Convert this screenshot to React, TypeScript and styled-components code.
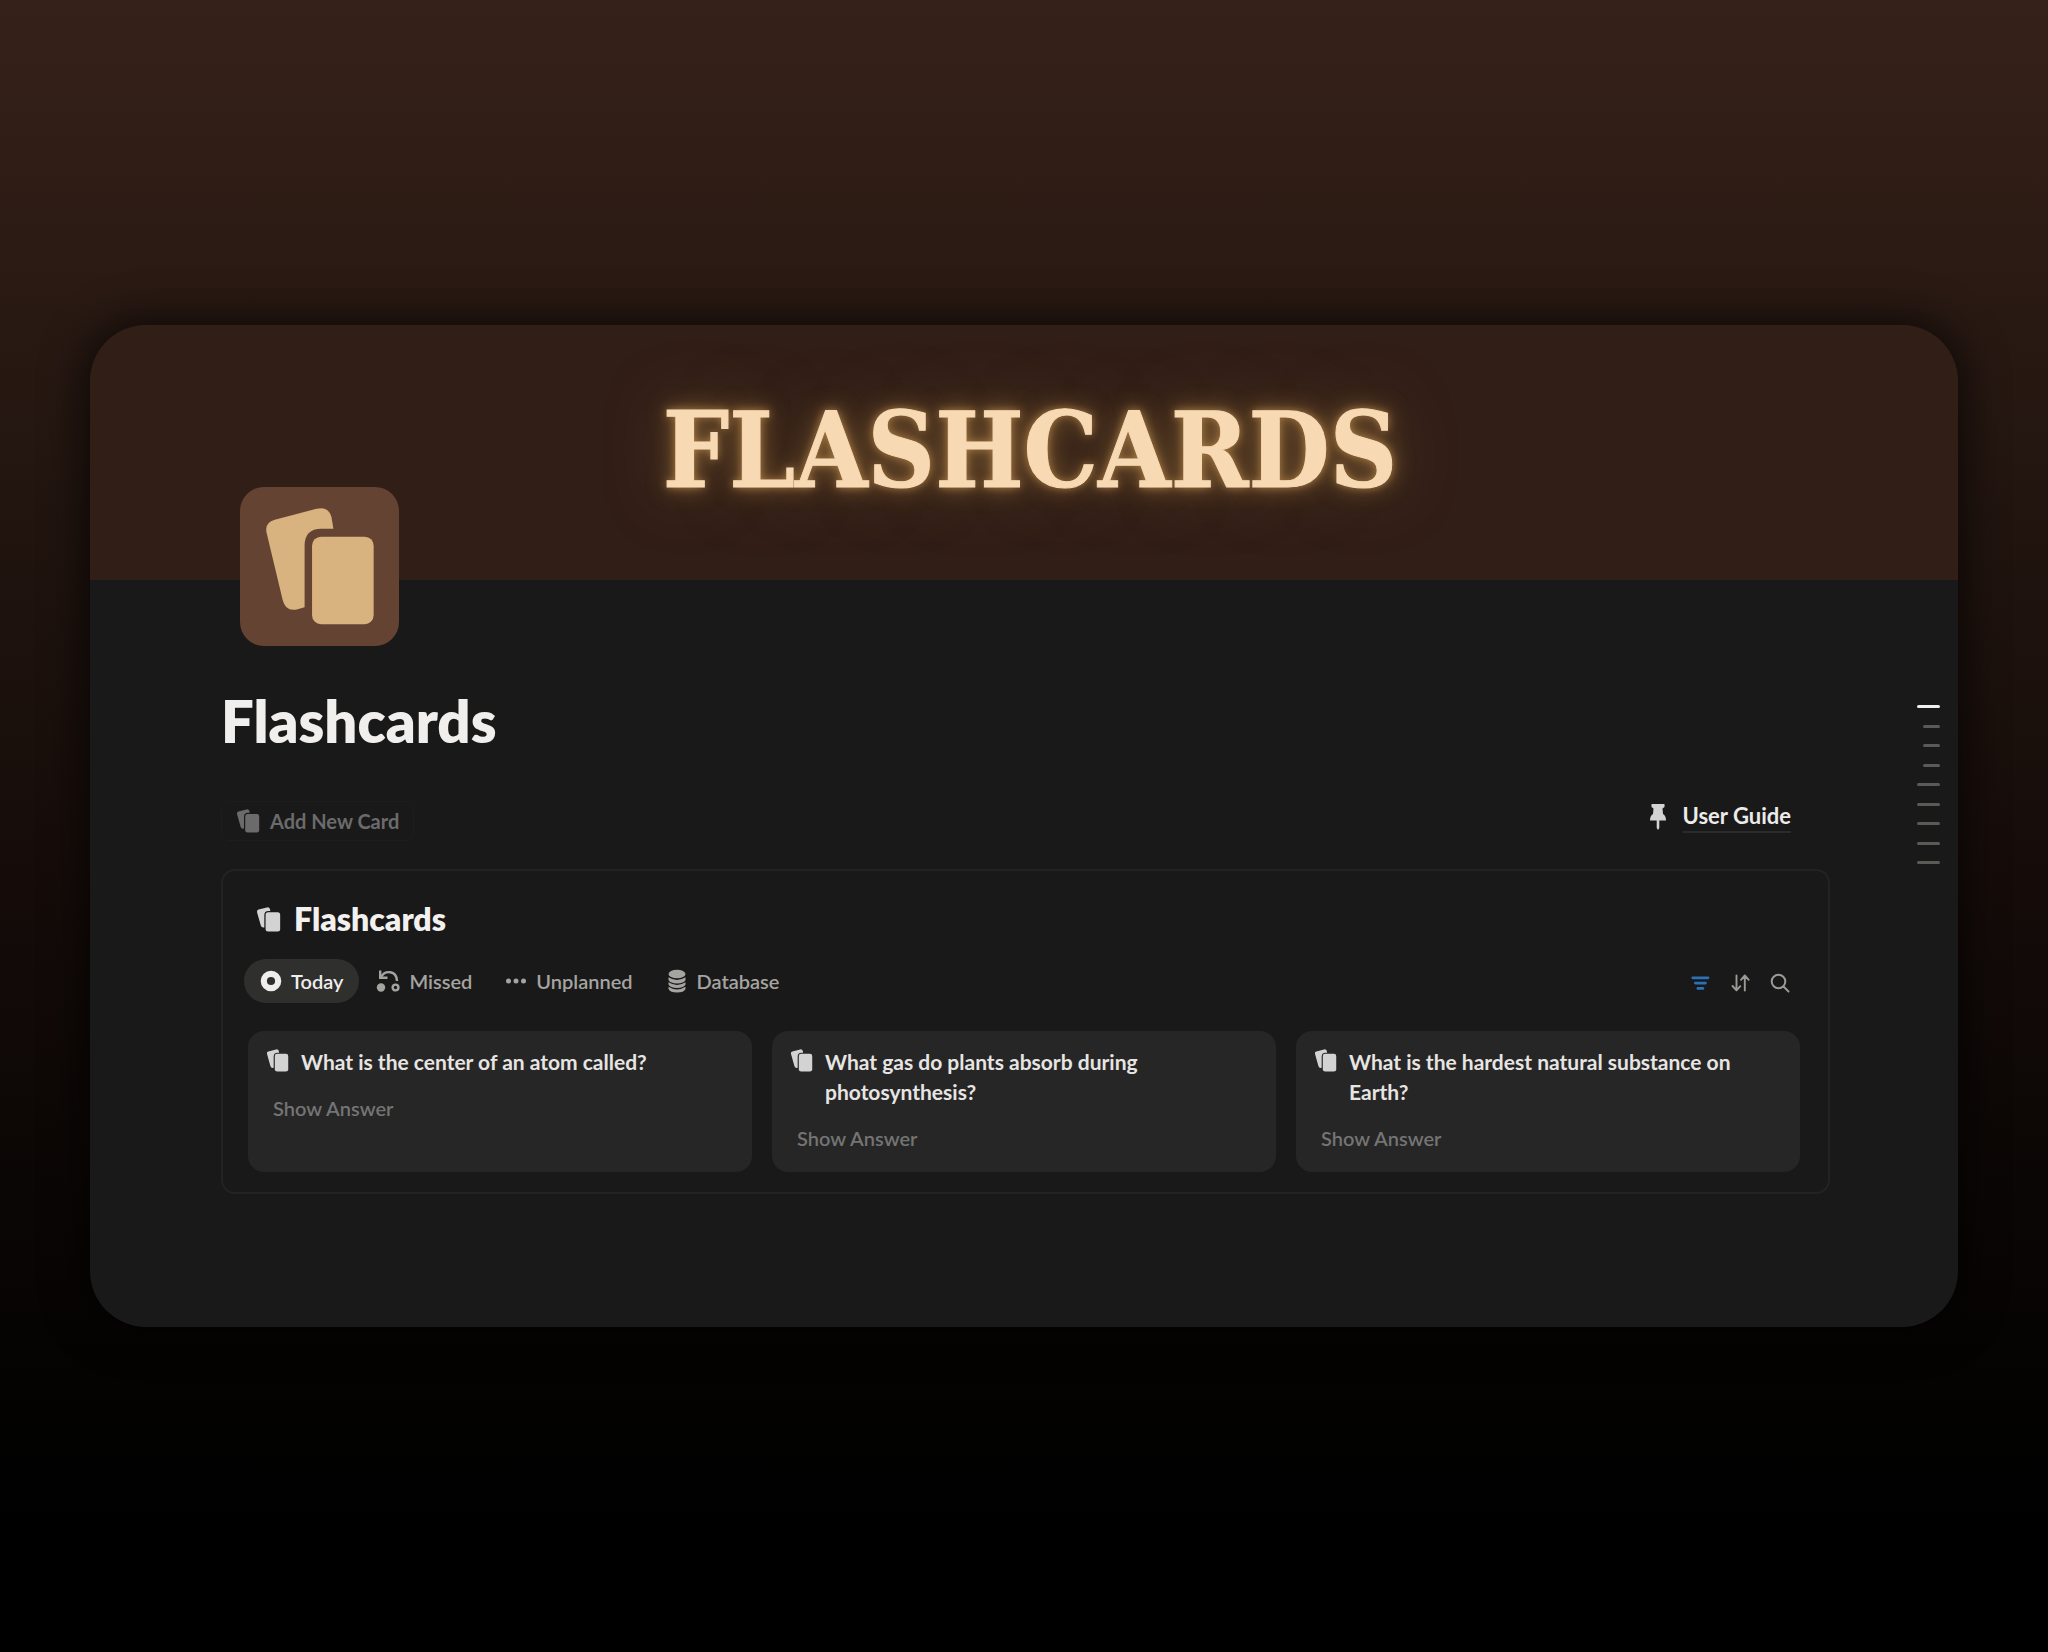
import React from "react";
import styled, { createGlobalStyle, css } from "styled-components";

const GlobalStyle = createGlobalStyle`
  *, *::before, *::after { box-sizing: border-box; }
  body {
    margin: 0;
    background: #000;
    color: #f0efed;
    font-family: Lato, "Open Sans", sans-serif;
    font-size: 20px;
    line-height: 30px;
  }
  button, a { font: inherit; color: inherit; }
  button { background: none; border: 0; padding: 0; margin: 0; cursor: pointer; }
  h1, h2, h3, p, ul { margin: 0; padding: 0; }
  ul { list-style: none; }
`;

const Backdrop = styled.div`
  min-height: 100vh;
  display: flex;
  align-items: center;
  padding: 64px 90px;
  background: linear-gradient(180deg, #36211a 0%, #2a1a13 17%, #1c110d 40%, #100907 62%, #040302 84%, #000 92%);
`;

const Page = styled.main`
  flex: 1;
  min-width: 0;
  border-radius: 56px;
  overflow: hidden;
  background: #191919;
  box-shadow: 0 0 44px 4px rgba(0, 0, 0, 0.7);
`;

const Banner = styled.header`
  height: 255px;
  display: flex;
  justify-content: center;
  align-items: center;
  padding: 0 0 4px 12px;
  background: #311e17;
`;

const Neon = styled.p`
  font-family: "DejaVu Serif Condensed", "DejaVu Serif", serif;
  font-weight: 700;
  font-size: 104px;
  line-height: 128px;
  color: #f7d9b3;
  -webkit-text-stroke: 1px #f7d9b3;
  text-shadow: 0 0 8px #b08048, 0 0 22px rgba(160, 118, 64, 0.8), 0 0 60px rgba(110, 86, 48, 0.8);
`;

const Content = styled.div`
  display: flow-root;
  position: relative;
  padding: 0 128px 133px 131px;
`;

const PageIcon = styled.div`
  width: 159px;
  height: 159px;
  margin: -93px 0 0 19px;
  border-radius: 24px;
  background: #654333;
  color: #d8b27f;
  display: flex;
  svg { width: 100%; height: 100%; }
`;

const Title = styled.h1`
  margin-top: 37px;
  font-size: 58px;
  line-height: 76px;
  font-weight: 800;
`;

const Actions = styled.div`
  margin-top: 42px;
  display: flex;
  justify-content: space-between;
  align-items: flex-start;
  padding-right: 39px;
`;

const AddButton = styled.button`
  height: 40px;
  display: flex;
  align-items: center;
  gap: 10px;
  padding: 0 14px;
  border: 1px solid #1d1d1d;
  border-radius: 8px;
  color: #6b6b6b;
  font-weight: 700;
`;

const GuideLink = styled.a`
  display: flex;
  align-items: center;
  gap: 14px;
  font-size: 22px;
  font-weight: 700;
  text-decoration: none;
  color: #ecebe9;
  span { border-bottom: 2px solid #2a2b2d; }
  svg { color: #d3d3d3; }
`;

const Board = styled.section`
  margin-top: 28px;
  padding: 28px 28px 20px 25px;
  border: 2px solid #232323;
  border-radius: 14px;
`;

const BoardTitle = styled.h2`
  display: flex;
  align-items: center;
  gap: 13px;
  padding-left: 8px;
  font-size: 32px;
  line-height: 40px;
  font-weight: 800;
  color: #f2f1ef;
  svg { color: #d3d3d3; }
`;

const Toolbar = styled.div`
  margin-top: 20px;
  display: flex;
  justify-content: space-between;
  align-items: center;
  padding-right: 8px;
`;

const Tabs = styled.div`
  display: flex;
  gap: 1px;
  margin-left: -4px;
`;

const Tab = styled.button<{ $active?: boolean }>`
  height: 44px;
  display: flex;
  align-items: center;
  gap: 9px;
  padding: 0 16px;
  border-radius: 22px;
  color: #a5a4a1;
  font-weight: 600;
  ${(p) => p.$active && css`
    background: #2f2f2e;
    color: #efeeec;
  `}
`;

const Tools = styled.div`
  display: flex;
  gap: 16px;
  padding-top: 4px;
`;

const Tool = styled.button<{ $on?: boolean }>`
  display: flex;
  color: ${(p) => (p.$on ? "#2b71b8" : "#9b9a97")};
`;

const Cards = styled.ul`
  margin-top: 28px;
  display: grid;
  grid-template-columns: repeat(3, 1fr);
  gap: 20px;
`;

const Card = styled.li`
  padding: 16px 18px 19px;
  border-radius: 16px;
  background: #262626;
`;

const Question = styled.h3`
  display: flex;
  gap: 12px;
  font-size: 21px;
  line-height: 30px;
  font-weight: 700;
  color: #e6e5e3;
  svg { flex: none; margin-top: 2px; color: #d3d3d3; }
`;

const Answer = styled.button`
  display: block;
  margin: 16px 0 0 7px;
  line-height: 30px;
  font-weight: 600;
  color: #747474;
`;

const Outline = styled.nav`
  position: absolute;
  top: 125px;
  right: 18px;
  height: 159px;
  display: flex;
  flex-direction: column;
  justify-content: space-between;
  align-items: flex-end;
`;

const Mark = styled.a<{ $level: "current" | "sub" | "main" }>`
  height: 3px;
  border-radius: 2px;
  width: ${(p) => (p.$level === "sub" ? 17 : 23)}px;
  background: ${(p) => (p.$level === "current" ? "#efefed" : "#5b5a57")};
`;

const BigCards = () => (
  <svg viewBox="0 0 160 160" fill="currentColor" aria-hidden="true">
    <path d="M35 33 L77 22 Q89 19 92 30 L94 42 H82 Q65 42 65 59 V121 L58 123 Q46 126 43 114 L27 47 Q24 36 35 33 Z" />
    <rect x="72.500" y="50" width="62" height="88" rx="9" />
  </svg>
);

const CardsIcon = ({ size = 24 }: { size?: number }) => (
  <svg width={size} height={size} viewBox="0 0 24 24" fill="currentColor" aria-hidden="true">
    <path d="M2.4 2.5 L10.5 .4 Q12.8 0 13.4 2 L13.7 3.8 H12 Q8 3.8 8 7.8 V19.6 Q5.2 20.2 4.6 17.8 L1 5 Q.5 3 2.4 2.5 Z" />
    <rect x="9.2" y="5" width="14" height="18.600" rx="2.4" />
  </svg>
);

const PinIcon = () => (
  <svg width="22" height="26" viewBox="0 0 22 26" fill="currentColor" aria-hidden="true">
    <path d="M4.5 0 H17.5 V3 L15.5 4.5 L16 10 Q19 11.500 19 16.500 H12.300 V24 L11 26 L9.700 24 V16.500 H3 Q3 11.500 6 10 L6.500 4.500 L4.500 3 Z" />
  </svg>
);

const RingIcon = () => (
  <svg width="22" height="22" viewBox="0 0 22 22" fill="none" stroke="currentColor" strokeWidth="6.2" aria-hidden="true">
    <circle cx="11" cy="11" r="7.200" />
  </svg>
);

const MissedIcon = () => (
  <svg width="24" height="24" viewBox="0 0 24 24" fill="none" stroke="currentColor" strokeWidth="2.400" aria-hidden="true">
    <circle cx="5" cy="18.500" r="4.200" fill="currentColor" stroke="none" />
    <circle cx="19.500" cy="18.500" r="2.900" />
    <path d="M5 8 C9 1 20.500 1 21 12" />
    <path d="M4.200 1.500 V8.800 H11.500" />
  </svg>
);

const DotsIcon = () => (
  <svg width="22" height="22" viewBox="0 0 22 22" fill="currentColor" aria-hidden="true">
    <circle cx="3.500" cy="11" r="2.500" />
    <circle cx="11" cy="11" r="2.500" />
    <circle cx="18.500" cy="11" r="2.500" />
  </svg>
);

const DatabaseIcon = () => (
  <svg width="22" height="24" viewBox="0 0 22 24" fill="currentColor" aria-hidden="true">
    <ellipse cx="11" cy="5" rx="8.500" ry="4.300" />
    <path d="M2.500 8.200 Q11 13.600 19.500 8.200 V11 Q18 14.400 11 14.400 Q4 14.400 2.500 11 Z" />
    <path d="M2.500 13.200 Q11 18.600 19.500 13.200 V15.500 Q18 18.900 11 18.900 Q4 18.900 2.500 15.500 Z" />
    <path d="M2.500 17.700 Q11 23.100 19.500 17.700 V20 Q18 23.500 11 23.500 Q4 23.500 2.500 20 Z" />
  </svg>
);

const FilterIcon = () => (
  <svg width="24" height="24" viewBox="0 0 24 24" fill="none" stroke="currentColor" strokeWidth="2.800" strokeLinecap="round" aria-hidden="true">
    <path d="M4.800 6.800 H20 M7.400 12.100 H17.400 M9.900 17.400 H14.900" />
  </svg>
);

const SortIcon = () => (
  <svg width="24" height="24" viewBox="0 0 24 24" fill="none" stroke="currentColor" strokeWidth="1.900" strokeLinecap="round" strokeLinejoin="round" aria-hidden="true">
    <path d="M8.500 4.500 V19 M4.500 15 L8.500 19.300 L12.300 15.200 M16.800 19.500 V5 M13 8.800 L16.800 4.500 L20.700 8.800" />
  </svg>
);

const SearchIcon = () => (
  <svg width="24" height="24" viewBox="0 0 24 24" fill="none" stroke="currentColor" strokeWidth="2" strokeLinecap="round" aria-hidden="true">
    <circle cx="10.500" cy="10.500" r="6.800" />
    <path d="M15.500 15.500 L20.500 20.500" />
  </svg>
);

const tabs = [
  { label: "Today", icon: <RingIcon /> },
  { label: "Missed", icon: <MissedIcon /> },
  { label: "Unplanned", icon: <DotsIcon /> },
  { label: "Database", icon: <DatabaseIcon /> },
];

const questions = [
  "What is the center of an atom called?",
  "What gas do plants absorb during photosynthesis?",
  "What is the hardest natural substance on Earth?",
];

const marks = ["current", "sub", "sub", "sub", "main", "main", "main", "main", "main"] as const;

export default function App() {
  return (
    <Backdrop>
      <GlobalStyle />
      <Page>
        <Banner>
          <Neon>FLASHCARDS</Neon>
        </Banner>
        <Content>
          <PageIcon>
            <BigCards />
          </PageIcon>
          <Title>Flashcards</Title>
          <Actions>
            <AddButton type="button">
              <CardsIcon />
              Add New Card
            </AddButton>
            <GuideLink href="#guide">
              <PinIcon />
              <span>User Guide</span>
            </GuideLink>
          </Actions>
          <Board id="board">
            <BoardTitle>
              <CardsIcon size={25} />
              Flashcards
            </BoardTitle>
            <Toolbar>
              <Tabs role="tablist">
                {tabs.map((tab, i) => (
                  <Tab key={tab.label} type="button" role="tab" aria-selected={i === 0} $active={i === 0}>
                    {tab.icon}
                    {tab.label}
                  </Tab>
                ))}
              </Tabs>
              <Tools>
                <Tool type="button" aria-label="Filter" $on>
                  <FilterIcon />
                </Tool>
                <Tool type="button" aria-label="Sort">
                  <SortIcon />
                </Tool>
                <Tool type="button" aria-label="Search">
                  <SearchIcon />
                </Tool>
              </Tools>
            </Toolbar>
            <Cards>
              {questions.map((q) => (
                <Card key={q}>
                  <Question>
                    <CardsIcon size={23} />
                    <span>{q}</span>
                  </Question>
                  <Answer type="button">Show Answer</Answer>
                </Card>
              ))}
            </Cards>
          </Board>
          <Outline aria-label="Page outline">
            {marks.map((level, i) => (
              <Mark key={i} href="#board" aria-label={`Section ${i + 1}`} $level={level} />
            ))}
          </Outline>
        </Content>
      </Page>
    </Backdrop>
  );
}
